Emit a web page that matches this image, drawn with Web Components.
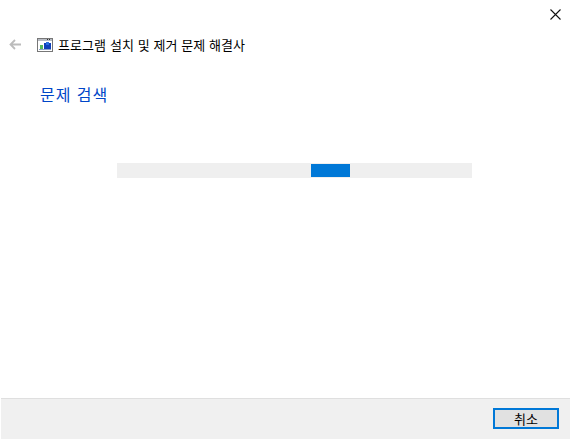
<!DOCTYPE html>
<html lang="ko"><head><meta charset="utf-8"><title>문제 해결사</title>
<style>
html,body{margin:0;padding:0;background:#fff;height:100%}
body{font-family:"Noto Sans CJK KR","Noto Sans",sans-serif;overflow:hidden}
</style></head><body>
<wizard-window>
<span slot="title">프로그램 설치 및 제거 문제 해결사</span>
<span slot="heading">문제 검색</span>
<span slot="cancel">취소</span>
</wizard-window>
<script>
class WizProgress extends HTMLElement{constructor(){super();this.attachShadow({mode:'open'}).innerHTML=`<style>
:host{display:flex;align-items:center;width:355px;height:15px;background:#efefef;margin-left:117px}
.c{width:39px;height:13px;background:#0078d7;margin-left:194px}
</style><div class="c"></div>`}}
customElements.define('wiz-progress',WizProgress);
class WizButton extends HTMLElement{constructor(){super();this.attachShadow({mode:'open'}).innerHTML=`<style>
:host{display:flex;align-items:center;justify-content:center;box-sizing:border-box;width:66px;height:21px;border:2px solid #0078d7;background:#e1e1e1;color:#000;font-size:13px;line-height:1}
</style><slot></slot>`}}
customElements.define('wiz-button',WizButton);
class WizardWindow extends HTMLElement{constructor(){super();this.attachShadow({mode:'open'}).innerHTML=`<style>
:host{display:flex;flex-direction:column;width:571px;height:440px;background:#fff;color:#000}
.top{display:flex;justify-content:flex-end;height:30px}
.close{margin:9px 10px 0 0;width:11px;height:11px;display:block}
.nav{display:flex;align-items:center;height:29px;padding-left:9px}
.back{width:12px;height:11px;display:block}
.icon{width:16px;height:14px;display:block;margin-left:16px}
.title{font-size:13px;margin-left:5px;line-height:18px;letter-spacing:.08px;white-space:nowrap}
.heading{font-size:16px;line-height:24px;color:#0046c8;margin:23px 0 0 40px;letter-spacing:.95px;white-space:nowrap}
wiz-progress{margin-top:57px}
.spacer{flex:1}
.foot{display:flex;justify-content:flex-end;align-items:flex-start;box-sizing:border-box;height:41px;margin:0 1px 1px;background:#f0f0f0;border-top:1px solid #dfdfdf;padding:9px 11px 0 0}
</style>
<div class="top"><svg class="close" viewBox="0 0 11 11"><path d="M.5.5l10 10M10.5.5l-10 10" stroke="#111" stroke-width="1.1" fill="none"/></svg></div>
<div class="nav">
<svg class="back" viewBox="0 0 12 11"><path d="M12 5.5H1.5M6 1L1.5 5.500l4.500 4.500" stroke="#bcbcbc" stroke-width="1.8" fill="none"/></svg>
<svg class="icon" viewBox="0 0 16 14" shape-rendering="crispEdges"><rect x=".5" y=".5" width="15" height="13" fill="#fff" stroke="#777"/><rect x="1" y="1" width="14" height="2" fill="#b8bcc4"/><rect x="10" y="1" width="1" height="1" fill="#333"/><rect x="12" y="1" width="1" height="1" fill="#333"/><rect x="7" y="5" width="7" height="7" fill="#1040b8"/><rect x="9" y="4" width="3" height="3" fill="#2a70e0"/><rect x="3" y="7" width="3" height="4" fill="#58b858"/><rect x="2" y="11" width="12" height="1" fill="#8aa0c8"/></svg>
<span class="title"><slot name="title"></slot></span></div>
<div class="heading"><slot name="heading"></slot></div>
<wiz-progress></wiz-progress>
<div class="spacer"></div>
<div class="foot"><wiz-button><slot name="cancel"></slot></wiz-button></div>`}}
customElements.define('wizard-window',WizardWindow);
</script>
</body></html>
